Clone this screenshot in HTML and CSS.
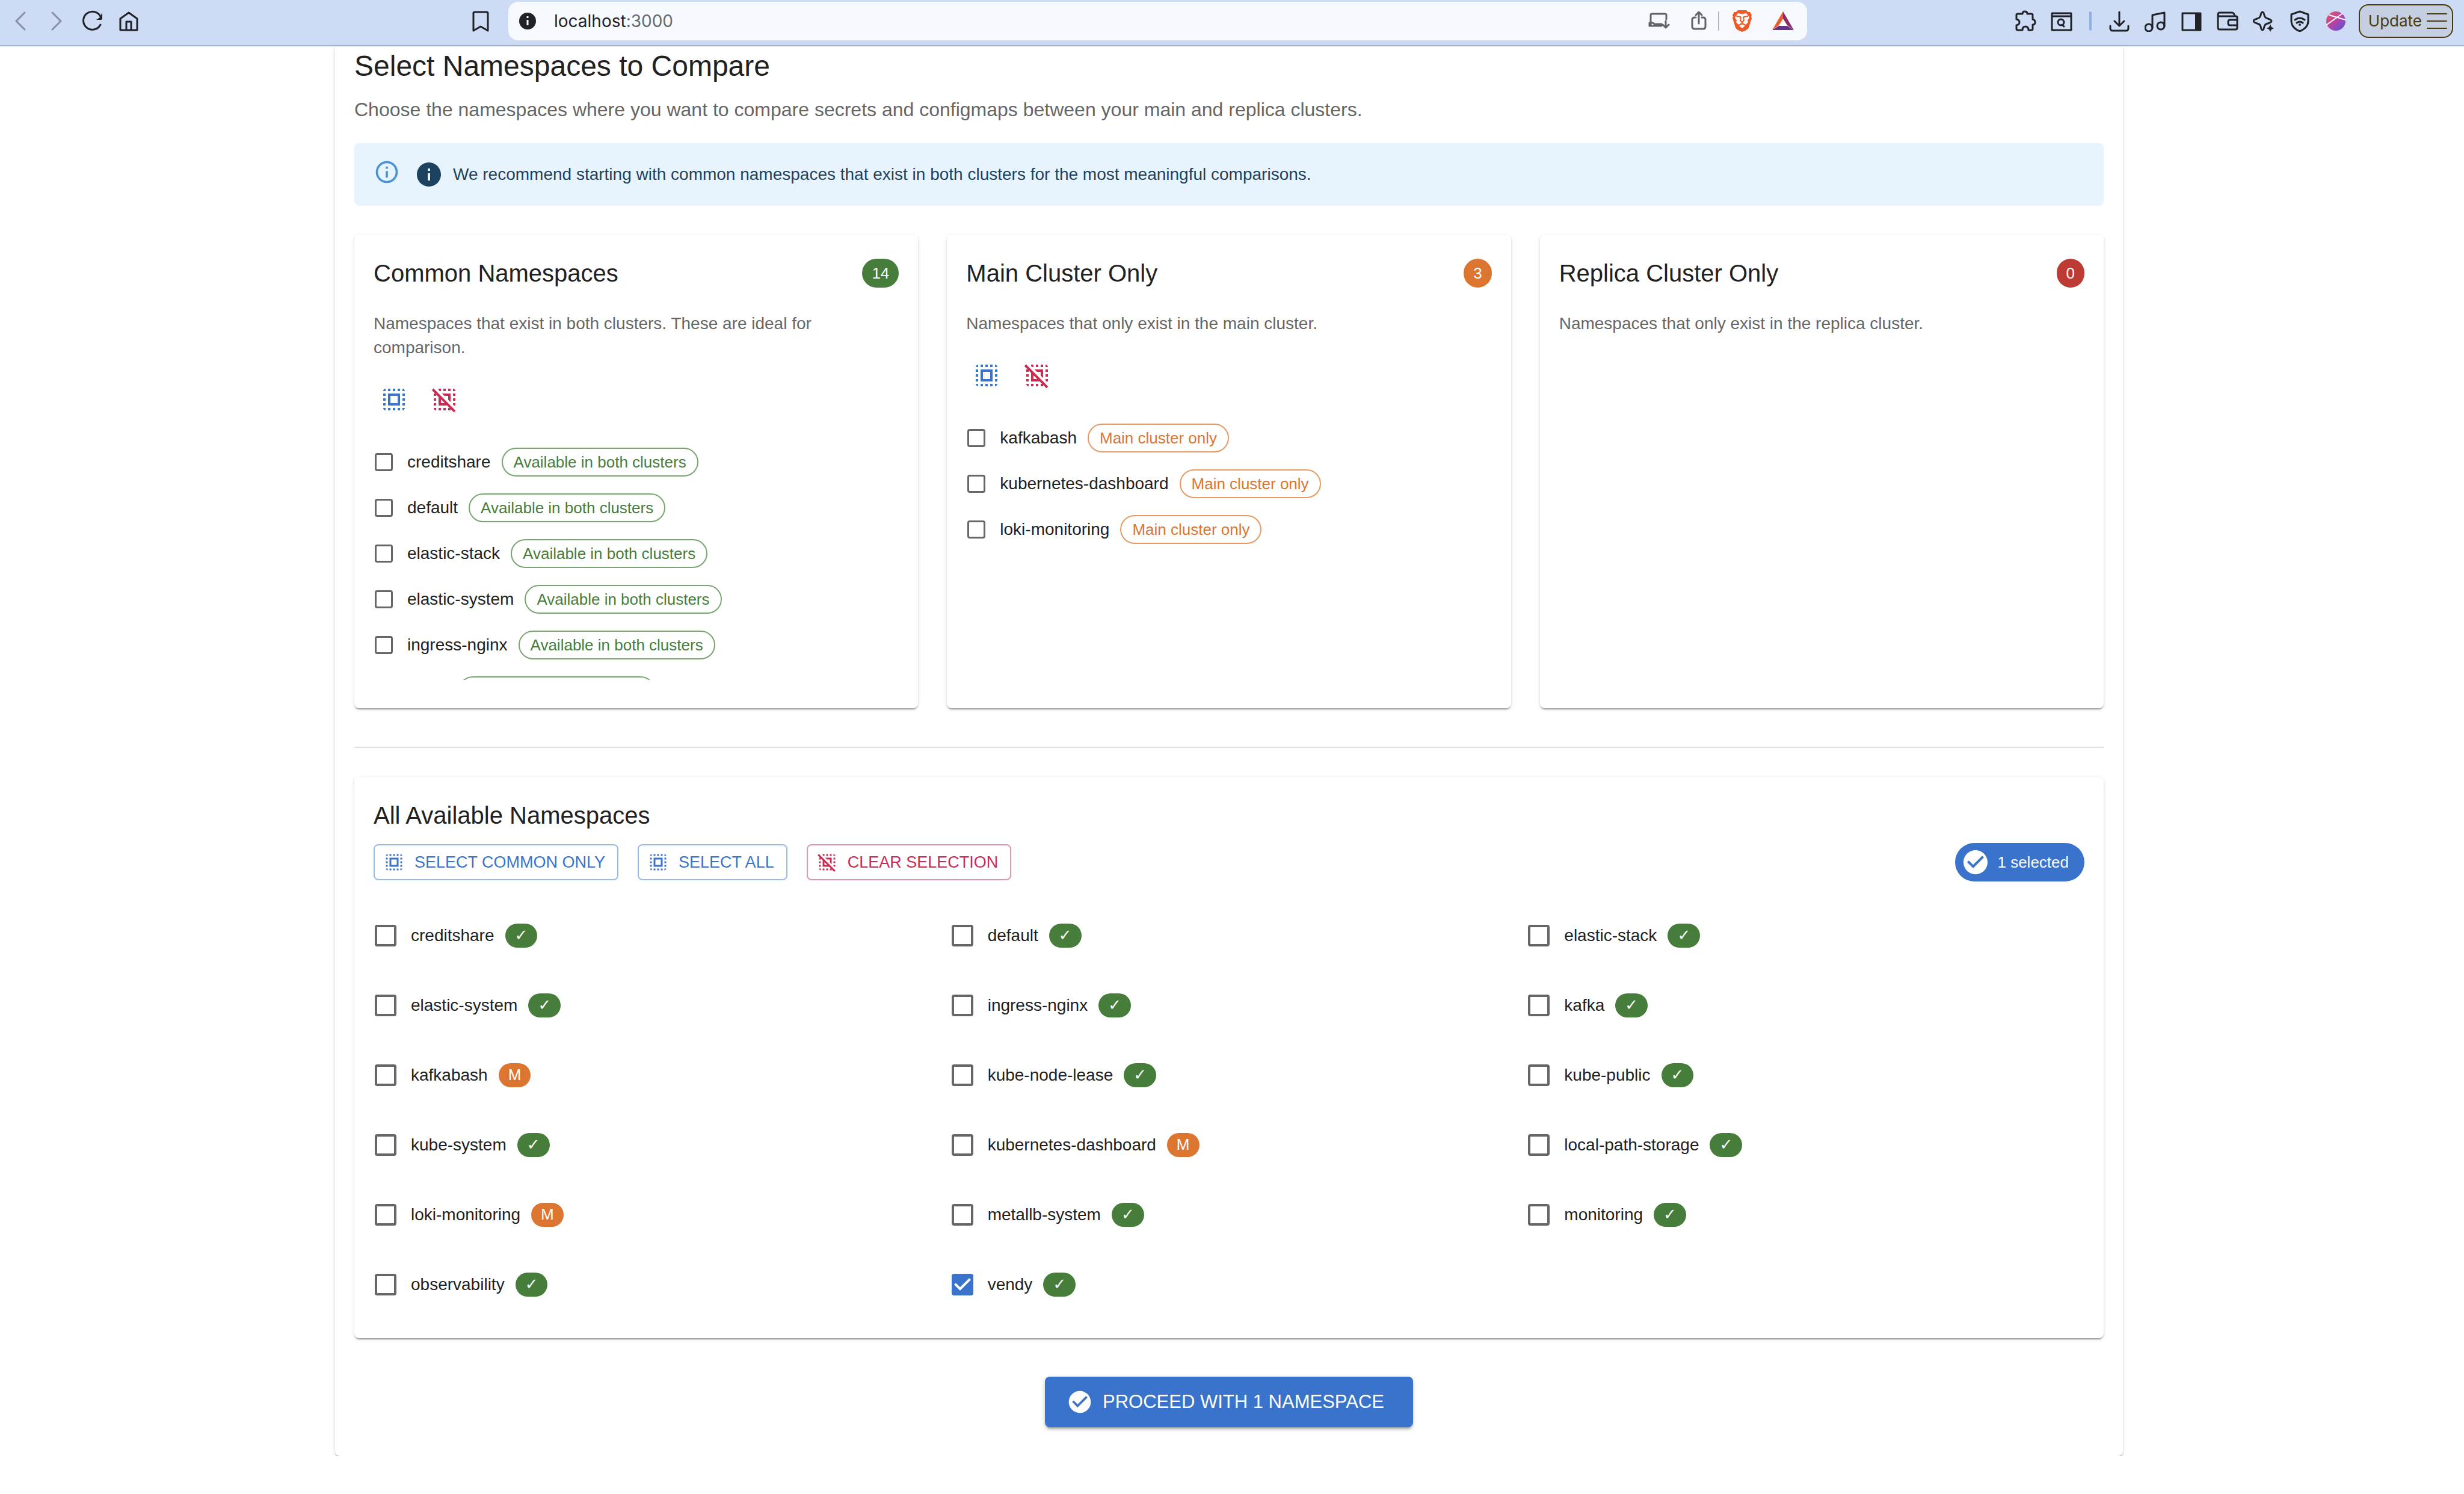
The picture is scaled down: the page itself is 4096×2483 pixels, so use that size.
FILE: index.html
```html
<!DOCTYPE html>
<html lang="en">
<head>
<meta charset="utf-8">
<title>Select Namespaces to Compare</title>
<link rel="stylesheet" href="styles.css">
</head>
<body>
<svg class="symbols" aria-hidden="true">
  <symbol id="select-all" viewBox="0 0 24 24"><path d="M3 5h2V3c-1.1 0-2 .9-2 2zm0 8h2v-2H3v2zm4 8h2v-2H7v2zM3 9h2V7H3v2zm10-6h-2v2h2V3zm6 0v2h2c0-1.1-.9-2-2-2zM5 21v-2H3c0 1.1.9 2 2 2zm-2-4h2v-2H3v2zM9 3H7v2h2V3zm2 18h2v-2h-2v2zm8-8h2v-2h-2v2zm0 8c1.1 0 2-.9 2-2h-2v2zm0-12h2V7h-2v2zm0 8h2v-2h-2v2zm-4 4h2v-2h-2v2zm0-16h2V3h-2v2zM7 17h10V7H7v10zm2-8h6v6H9V9z"/></symbol>
  <symbol id="deselect" viewBox="0 0 24 24"><path d="M3 13h2v-2H3v2zm4 8h2v-2H7v2zm6-18h-2v2h2V3zm6 0v2h2c0-1.1-.9-2-2-2zM5 21v-2H3c0 1.1.9 2 2 2zm-2-4h2v-2H3v2zm8 4h2v-2h-2v2zm8-8h2v-2h-2v2zm0-4h2V7h-2v2zm-4-4h2V3h-2v2zM7.83 5 7 4.17V3h2v2H7.83zm12 12-.83-.83V15h2v2h-1.17zm1.36 4.19L2.81 2.81 1.39 4.22 4.17 7H3v2h2V7.83l2 2V17h7.17l2 2H15v2h2v-1.17l2.78 2.78 1.41-1.42zM9 15v-3.17L12.17 15H9zm6-2.83V9h-3.17l-2-2H17v7.17l-2-2z"/></symbol>
  <symbol id="check-circle" viewBox="0 0 24 24"><path d="M12 2C6.48 2 2 6.48 2 12s4.48 10 10 10 10-4.48 10-10S17.52 2 12 2zm-2 15l-5-5 1.41-1.41L10 14.17l7.59-7.59L19 8l-9 9z"/></symbol>
  <symbol id="info" viewBox="0 0 24 24"><path d="M12 2C6.48 2 2 6.48 2 12s4.48 10 10 10 10-4.48 10-10S17.52 2 12 2zm1 15h-2v-6h2v6zm0-8h-2V7h2v2z"/></symbol>
  <symbol id="info-outline" viewBox="0 0 24 24"><path d="M11,9H13V7H11M12,20C7.59,20 4,16.41 4,12C4,7.59 7.59,4 12,4C16.41,4 20,7.59 20,12C20,16.41 16.41,20 12,20M12,2A10,10 0 0,0 2,12A10,10 0 0,0 12,22A10,10 0 0,0 22,12A10,10 0 0,0 12,2M11,17H13V11H11V17Z"/></symbol>
</svg>

<header class="toolbar">
  <div class="toolbar-start">
    <nav class="nav-buttons">
      <button class="tool dim" aria-label="Back"><svg viewBox="0 0 36 36"><path d="M25 4 11 18 25 32"/></svg></button>
      <button class="tool dim" aria-label="Forward"><svg viewBox="0 0 36 36"><path d="M11 4 25 18 11 32"/></svg></button>
      <button class="tool" aria-label="Reload"><svg viewBox="0 0 36 36"><path d="M31 24A15 15 0 1 1 32 13"/><path class="solid" d="M34 4v10q0 2-2 2H24l6-4z"/></svg></button>
      <button class="tool" aria-label="Home"><svg viewBox="0 0 36 36"><path d="M4 14 18 4 32 14V33H4zM14 33V19h8v14"/></svg></button>
    </nav>
    <button class="tool" aria-label="Bookmark"><svg viewBox="0 0 36 36"><path d="M6 34V5q0-2 2-2h20q2 0 2 2v29L18 27z"/></svg></button>
  </div>
  <div class="address">
    <svg class="site-info" viewBox="0 0 28 28"><circle cx="14" cy="14" r="14"/><path d="M14 12v9M14 6v3"/></svg>
    <a class="url" href="http://localhost:3000">localhost<span class="port">:3000</span></a>
    <button class="tool gray" aria-label="Install"><svg viewBox="0 0 36 36"><path d="M4 26V8q0-2 2-2h22q2 0 2 2v7M2 26v-5h6l2 2h12M2 26h20M29 18v10M24 24l5 5 5-5"/></svg></button>
    <button class="tool gray share" aria-label="Share"><svg viewBox="0 0 36 36"><path d="M13 12h-2q-4 0-4 4v11q0 4 4 4h14q4 0 4-4V16q0-4-4-4h-2M18 22V3M13 8l5-5 5 5"/></svg></button>
    <span class="address-rule"></span>
    <button class="tool brave" aria-label="Shields"><svg viewBox="0 0 36 36"><path fill="#ef5a24" stroke="none" d="M11 0h14l3 3 3 0 3 5-1 3 1 2-5 16q-1 2-4 4l-7 3-7-3q-3-2-4-4L2 13l1-2-1-3 3-5h3z"/><path fill="#fff" stroke="none" d="M11 5l5 1h4l5-1 5 7-3 5 1 3-4 4-3-2-3-1-3 1-3 2-4-4 1-3-3-5zM13 26l5-3 5 3-5 4z"/><path stroke="#ef5a24" stroke-width="2" d="M9 10l6 1 1 1-1 5 3 3 3-3-1-5 1-1 6-1M18 20v3"/></svg></button>
    <button class="tool bat" aria-label="Rewards"><svg viewBox="0 0 36 36"><path fill="#fff" stroke="none" d="M18 12 26 26H10z"/><path fill="#f1592b" stroke="none" d="M18 2v12l-7 11L0 33z"/><path fill="#922a63" stroke="none" d="M18 2 36 33 25 25 18 14z"/><path fill="#65308f" stroke="none" d="M0 33 11 26h14l11 7z"/></svg></button>
  </div>
  <div class="toolbar-end">
    <button class="tool" aria-label="Extensions"><svg viewBox="0 0 36 36"><path d="M5 6h8q0-4 4-4t4 4h7q2 0 2 2v7q4 1 4 5t-4 4v7q0 2-2 2h-5q0-6-5-6t-5 6H5q-2 0-2-2v-6q5-1 5-5t-5-5V8q0-2 2-2z"/></svg></button>
    <button class="tool" aria-label="Search tabs"><svg viewBox="0 0 36 36"><path d="M2 5h32v28H2zM2 10h32M22 27l-3-3"/><ellipse cx="17" cy="20" rx="5" ry="5"/></svg></button>
    <span class="tool-rule"></span>
    <button class="tool" aria-label="Downloads"><svg viewBox="0 0 36 36"><path d="M18 3v22M10 18l8 8 8-8M3 26v4q0 4 4 4h22q4 0 4-4v-4"/></svg></button>
    <button class="tool" aria-label="Media"><svg viewBox="0 0 36 36"><path d="M13 29V8l20-4v22"/><circle cx="7" cy="29" r="6"/><circle cx="27" cy="26" r="6"/></svg></button>
    <button class="tool" aria-label="Sidebar"><svg viewBox="0 0 36 36"><path d="M3 5h30v28H3z"/><path class="solid" d="M24 5h10v28H24z"/></svg></button>
    <button class="tool" aria-label="Wallet"><svg viewBox="0 0 36 36"><path d="M2 8v21q0 3 3 3h26q3 0 3-3V12q0-2-2-2H5q-3 0-3-3t3-3h20q4 0 5 6M34 16H22q-3 0-3 3v3q0 3 3 3h12"/></svg></button>
    <button class="tool" aria-label="Assistant"><svg viewBox="0 0 36 36"><path d="M16 3q2 0 3 5 1 5 6 6 6 2 6 4t-6 4q-5 1-6 5-1 6-3 6t-3-6q-1-4-6-5-6-2-6-4t6-4q5-1 6-6 1-5 3-5z"/><path class="solid" d="M29 23l2 5 4 2-4 2-2 4-2-4-4-2 4-2z"/></svg></button>
    <button class="tool" aria-label="VPN"><svg viewBox="0 0 36 36"><path d="M18 2 32 7v11q0 11-14 17Q4 29 4 18V7zM10 16q8-6 16 0M13 21q5-4 10 0"/><circle class="solid" cx="18" cy="24" r="2"/></svg></button>
    <button class="tool" aria-label="Profile"><svg viewBox="0 0 36 36"><defs><linearGradient id="avatar" x1="0" y1="0" x2="1" y2="1"><stop offset="0" stop-color="#e85a5f"/><stop offset=".5" stop-color="#b541a5"/><stop offset="1" stop-color="#4957e0"/></linearGradient></defs><circle cx="18" cy="18" r="16" fill="url(#avatar)" stroke="none"/><path stroke="#fff" stroke-width="2" d="M7 8 34 16M3 24 28 6"/></svg></button>
    <button class="update">Update<svg viewBox="0 0 34 28"><path d="M1 2h32M1 14h32M1 26h32"/></svg></button>
  </div>
</header>

<main class="page">
  <section class="paper">
    <h1 class="heading">Select Namespaces to Compare</h1>
    <p class="lead">Choose the namespaces where you want to compare secrets and configmaps between your main and replica clusters.</p>
    <div class="alert" role="note">
      <svg class="alert-icon"><use href="#info-outline"/></svg>
      <div class="alert-message"><svg><use href="#info"/></svg><span>We recommend starting with common namespaces that exist in both clusters for the most meaningful comparisons.</span></div>
    </div>

    <div class="groups">
      <section class="card">
        <div class="card-head"><h2>Common Namespaces</h2><span class="count green">14</span></div>
        <p class="card-text">Namespaces that exist in both clusters. These are ideal for comparison.</p>
        <div class="card-tools">
          <button class="icon-button blue-ink" aria-label="Select all"><svg><use href="#select-all"/></svg></button>
          <button class="icon-button pink-ink" aria-label="Deselect all"><svg><use href="#deselect"/></svg></button>
        </div>
        <div class="name-list">
          <label class="name-row"><input type="checkbox">creditshare<span class="tag green-tag">Available in both clusters</span></label>
          <label class="name-row"><input type="checkbox">default<span class="tag green-tag">Available in both clusters</span></label>
          <label class="name-row"><input type="checkbox">elastic-stack<span class="tag green-tag">Available in both clusters</span></label>
          <label class="name-row"><input type="checkbox">elastic-system<span class="tag green-tag">Available in both clusters</span></label>
          <label class="name-row"><input type="checkbox">ingress-nginx<span class="tag green-tag">Available in both clusters</span></label>
          <label class="name-row"><input type="checkbox">kafka<span class="tag green-tag">Available in both clusters</span></label>
        </div>
      </section>
      <section class="card">
        <div class="card-head"><h2>Main Cluster Only</h2><span class="count orange">3</span></div>
        <p class="card-text">Namespaces that only exist in the main cluster.</p>
        <div class="card-tools">
          <button class="icon-button blue-ink" aria-label="Select all"><svg><use href="#select-all"/></svg></button>
          <button class="icon-button pink-ink" aria-label="Deselect all"><svg><use href="#deselect"/></svg></button>
        </div>
        <div class="name-list">
          <label class="name-row"><input type="checkbox">kafkabash<span class="tag orange-tag">Main cluster only</span></label>
          <label class="name-row"><input type="checkbox">kubernetes-dashboard<span class="tag orange-tag">Main cluster only</span></label>
          <label class="name-row"><input type="checkbox">loki-monitoring<span class="tag orange-tag">Main cluster only</span></label>
        </div>
      </section>
      <section class="card">
        <div class="card-head"><h2>Replica Cluster Only</h2><span class="count red">0</span></div>
        <p class="card-text">Namespaces that only exist in the replica cluster.</p>
      </section>
    </div>

    <hr class="divider">

    <section class="card all">
      <h2>All Available Namespaces</h2>
      <div class="actions">
        <button class="outlined blue-ink"><svg><use href="#select-all"/></svg>SELECT COMMON ONLY</button>
        <button class="outlined blue-ink"><svg><use href="#select-all"/></svg>SELECT ALL</button>
        <button class="outlined pink-ink"><svg><use href="#deselect"/></svg>CLEAR SELECTION</button>
        <span class="selected"><svg><use href="#check-circle"/></svg>1 selected</span>
      </div>
      <div class="all-grid">
        <label class="all-row"><input type="checkbox">creditshare<span class="mark green">✓</span></label>
        <label class="all-row"><input type="checkbox">default<span class="mark green">✓</span></label>
        <label class="all-row"><input type="checkbox">elastic-stack<span class="mark green">✓</span></label>
        <label class="all-row"><input type="checkbox">elastic-system<span class="mark green">✓</span></label>
        <label class="all-row"><input type="checkbox">ingress-nginx<span class="mark green">✓</span></label>
        <label class="all-row"><input type="checkbox">kafka<span class="mark green">✓</span></label>
        <label class="all-row"><input type="checkbox">kafkabash<span class="mark orange">M</span></label>
        <label class="all-row"><input type="checkbox">kube-node-lease<span class="mark green">✓</span></label>
        <label class="all-row"><input type="checkbox">kube-public<span class="mark green">✓</span></label>
        <label class="all-row"><input type="checkbox">kube-system<span class="mark green">✓</span></label>
        <label class="all-row"><input type="checkbox">kubernetes-dashboard<span class="mark orange">M</span></label>
        <label class="all-row"><input type="checkbox">local-path-storage<span class="mark green">✓</span></label>
        <label class="all-row"><input type="checkbox">loki-monitoring<span class="mark orange">M</span></label>
        <label class="all-row"><input type="checkbox">metallb-system<span class="mark green">✓</span></label>
        <label class="all-row"><input type="checkbox">monitoring<span class="mark green">✓</span></label>
        <label class="all-row"><input type="checkbox">observability<span class="mark green">✓</span></label>
        <label class="all-row"><input type="checkbox" checked>vendy<span class="mark green">✓</span></label>
      </div>
    </section>

    <button class="proceed"><svg><use href="#check-circle"/></svg>PROCEED WITH 1 NAMESPACE</button>
  </section>
</main>
</body>
</html>
```
FILE: styles.css
```css
:root {
  --blue: #3973cb;
  --pink: #c72c52;
  --green: #467d3b;
  --orange: #db752f;
  --red: #be3a34;
  --ink: #212121;
  --muted: #666;
  --shadow: 0 4px 2px -2px rgba(0, 0, 0, .2), 0 2px 2px 0 rgba(0, 0, 0, .14), 0 2px 6px 0 rgba(0, 0, 0, .12);
}

* { box-sizing: border-box; }

body {
  margin: 0;
  background: #fff;
  color: var(--ink);
  font-family: "Liberation Sans", Arial, sans-serif;
  font-size: 28px;
  line-height: 40px;
}

h1, h2, p { margin: 0; font-weight: 400; }
svg { display: block; flex: none; fill: currentColor; }
button { margin: 0; padding: 0; border: 0; background: none; color: inherit; font: inherit; cursor: pointer; }
.symbols { display: none; }

/* Browser toolbar */
.toolbar {
  display: grid;
  grid-template-columns: 845fr 2159fr 1092fr;
  align-items: center;
  height: 77px;
  padding-bottom: 6px;
  border-bottom: 2px solid #a3aecb;
  background: #cedbf5;
  color: #1f2226;
  font-family: Inter, "Liberation Sans", sans-serif;
}
.toolbar-start { display: flex; justify-content: space-between; padding: 0 28px 0 16px; }
.nav-buttons { display: flex; gap: 24px; }
.tool svg { width: 36px; height: 36px; fill: none; stroke: currentColor; stroke-width: 3; stroke-linecap: round; stroke-linejoin: round; }
.tool .solid { fill: currentColor; stroke: none; }
.dim { color: #8490a8; }
.gray { color: #606367; }
.address {
  display: flex;
  align-items: center;
  height: 64px;
  padding: 0 22px 0 18px;
  border-radius: 16px;
  background: #f6f9fd;
}
.site-info { width: 28px; height: 28px; margin-right: 30px; }
.site-info path { stroke: #f6f9fd; stroke-width: 3; }
.url { flex: 1; color: #1f2226; text-decoration: none; }
.port { color: #66696e; }
.share { margin-left: 30px; }
.address-rule { width: 2px; height: 32px; margin: 0 20px 0 14px; background: #b4b6ba; }
.bat { margin-left: 32px; }
.toolbar-end { display: flex; justify-content: flex-end; align-items: center; gap: 24px; padding-right: 18px; }
.tool-rule { width: 4px; height: 32px; margin: 0 4px; border-radius: 2px; background: #8fb0ea; }
.update {
  display: flex;
  align-items: center;
  gap: 8px;
  height: 56px;
  margin-left: -4px;
  padding: 0 8px 0 14px;
  border: 2px solid #4b3b0c;
  border-radius: 16px;
  background: #c5cfe1;
  color: #4b3b0c;
  font-size: 26px;
}
.update svg { width: 34px; height: 28px; stroke: currentColor; stroke-width: 2; stroke-linecap: round; }

/* Page */
.page { padding: 0 567px 0 557px; }
.paper {
  display: flex;
  flex-direction: column;
  padding: 1px 32px 48px;
  border-radius: 0 0 8px 8px;
  box-shadow: var(--shadow);
}
.heading { margin-bottom: 16px; font-size: 48px; line-height: 64px; }
.lead { margin-bottom: 32px; color: var(--muted); font-size: 32px; line-height: 48px; }

.alert {
  display: flex;
  gap: 24px;
  margin-bottom: 48px;
  padding: 12px 32px;
  border-radius: 8px;
  background: #e8f4fd;
  color: #1c4260;
}
.alert-icon { width: 44px; height: 44px; margin-top: 14px; color: #4b93d6; }
.alert-message { display: flex; align-items: center; gap: 16px; padding: 16px 0; }
.alert-message svg { width: 48px; height: 48px; }

.groups { display: grid; grid-template-columns: repeat(3, 1fr); gap: 48px; }
.card { padding: 32px 32px 47px; border-radius: 8px; background: #fff; box-shadow: var(--shadow); }
.card h2 { font-size: 40px; line-height: 64px; }
.card-head { display: flex; justify-content: space-between; align-items: center; }
.card-text { margin: 32px 0; color: var(--muted); }
.card-tools { display: flex; gap: 16px; margin-bottom: 32px; }
.icon-button { padding: 10px; }
.icon-button svg { width: 48px; height: 48px; }
.blue-ink { color: var(--blue); }
.pink-ink { color: var(--pink); }

.count, .mark {
  height: 48px;
  padding: 0 16px;
  border-radius: 24px;
  color: #fff;
  font-size: 26px;
  line-height: 48px;
}
.green { background: var(--green); }
.orange { background: var(--orange); }
.red { background: var(--red); }

.name-list { max-height: 400px; overflow-y: auto; scrollbar-width: none; }
.name-row { display: flex; align-items: center; height: 76px; }
.tag {
  height: 48px;
  margin-left: 18px;
  padding: 0 18px;
  border: 2px solid;
  border-radius: 24px;
  font-size: 26px;
  line-height: 44px;
}
.green-tag { border-color: #7aa572; color: var(--green); }
.orange-tag { border-color: #e59a66; color: var(--orange); }

input[type="checkbox"] { flex: none; appearance: none; margin: 0 24px 0 2px; border: solid var(--muted); border-radius: 4px; }
.name-row input { width: 30px; height: 30px; border-width: 3px; }
.all-row input { width: 36px; height: 36px; border-width: 4px; }
input[type="checkbox"]:checked {
  border: 0;
  background: var(--blue) url("data:image/svg+xml,%3Csvg xmlns='http://www.w3.org/2000/svg' viewBox='3 3 18 18'%3E%3Cpath fill='%23fff' d='M10 17l-5-5 1.41-1.41L10 14.17l7.59-7.59L19 8z'/%3E%3C/svg%3E") center / 100%;
}

.divider { width: 100%; height: 2px; margin: 64px 0 48px; border: 0; background: #e0e0e0; }

.actions { display: flex; align-items: center; gap: 32px; margin: 14px 0 48px; }
.outlined {
  display: flex;
  align-items: center;
  gap: 16px;
  height: 60px;
  padding: 0 20px 0 14px;
  border: 2px solid #9bb9e5;
  border-radius: 8px;
  font-size: 27px;
}
.outlined.pink-ink { border-color: #e395a8; }
.outlined svg { width: 36px; height: 36px; }
.selected {
  display: flex;
  align-items: center;
  gap: 12px;
  height: 64px;
  margin-left: auto;
  padding: 0 26px 0 10px;
  border-radius: 32px;
  background: var(--blue);
  color: #fff;
  font-size: 26px;
}
.selected svg { width: 48px; height: 48px; }

.all-grid { display: grid; grid-template-columns: repeat(3, 1fr); gap: 32px; }
.all-row { display: flex; align-items: center; height: 84px; }
.mark { min-width: 52px; height: 40px; margin-left: 18px; border-radius: 20px; font-family: "Liberation Sans", "DejaVu Sans", sans-serif; line-height: 38px; text-align: center; }
.mark.green { font-weight: 700; }

.proceed {
  display: flex;
  align-items: center;
  align-self: center;
  gap: 16px;
  height: 84px;
  margin-top: 64px;
  padding: 0 48px 0 36px;
  border-radius: 8px;
  background: var(--blue);
  box-shadow: 0 6px 2px -4px rgba(0, 0, 0, .2), 0 4px 4px 0 rgba(0, 0, 0, .14), 0 2px 10px 0 rgba(0, 0, 0, .12);
  color: #fff;
  font-size: 31px;
}
.proceed svg { width: 44px; height: 44px; }
```
